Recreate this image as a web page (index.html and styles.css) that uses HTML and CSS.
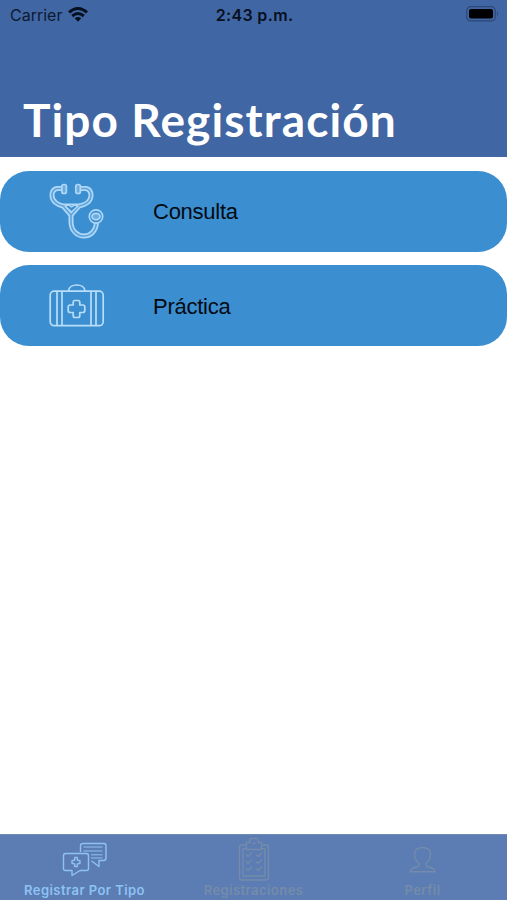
FILE: index.html
```html
<!DOCTYPE html>
<html lang="es">
<head>
<meta charset="utf-8">
<title>Tipo Registración</title>
<link rel="stylesheet" href="styles.css">
</head>
<body>
<div class="app">
  <header class="header">
    <div class="status">
      <div class="carrier"><span>Carrier</span>
        <svg class="wifi" width="20" height="15" viewBox="0 0 20 15" fill="none" stroke="#07101f" stroke-width="3"><path d="M1 5.400Q10-2.300 19 5.400M4.200 9Q10 4.100 15.800 9"/><path d="M6.700 11.300Q10 8.600 13.300 11.300L10 14.700Z" fill="#07101f" stroke="none"/></svg>
      </div>
      <div class="time">2:43 p.m.</div>
      <svg class="battery" width="34" height="16" viewBox="0 0 34 16"><rect x=".8" y=".7" width="28.400" height="14.200" rx="4" fill="none" stroke="#2c4778" stroke-width="1.200"/><rect x="3" y="3" width="24" height="9.600" rx="2" fill="#000"/><path d="M31 5.500q2 2 0 4.500z" fill="#2c4778"/></svg>
    </div>
    <h1 class="title">Tipo Registración</h1>
  </header>
  <main class="list">
    <div class="card">
      <svg class="icon" width="56" height="56" viewBox="0 0 56 56" fill="none" stroke-linecap="round" stroke-linejoin="round">
        <g stroke="#b0d7f5" stroke-width="5"><path d="M13 5.500H8Q3 6.500 3 12.500C3 18.500 9 22 14 23H30C36 22 42 18.500 42 12.500Q42 6.500 37 5.500H32M15 24L22 32L29 24M22 32V38.500C22 57.500 48 58.500 47.500 37.500"/></g>
        <g stroke="#5ba4dd" stroke-width="1.600"><path d="M13 5.500H8Q3 6.500 3 12.500C3 18.500 9 22 14 23H30C36 22 42 18.500 42 12.500Q42 6.500 37 5.500H32M15 24L22 32L29 24M22 32V38.500C22 57.500 48 58.500 47.500 37.500"/></g>
        <path d="M16 23L19.500 22L22.500 24L25.500 22L29 23L22.500 29Z" fill="#3b8ed0" stroke="#b0d7f5" stroke-width="1.500"/>
        <g fill="#6bade1" stroke="#b0d7f5" stroke-width="1.700"><rect x="12.800" y="1.500" width="4.600" height="9" rx="2"/><rect x="26.800" y="1.500" width="4.600" height="9" rx="2"/><circle cx="47" cy="33.500" r="6.700" fill="#3b8ed0"/><ellipse cx="47" cy="33.500" rx="4" ry="3.200"/></g>
      </svg>
      <span class="label">Consulta</span>
    </div>
    <div class="card">
      <svg class="icon" width="56" height="56" viewBox="0 0 56 56" fill="none" stroke="#b9ddf8" stroke-width="1.700" stroke-linejoin="round"><rect x="1.200" y="13.200" width="53" height="34.500" rx="4"/><path d="M8 13.500V47.500M13 13.500V47.500M42 13.500V47.500M47 13.500V47.500M19.500 13C20 5 35.500 5 36 13"/><path d="M25.800 22.500H29.200Q30.800 22.500 30.800 24V27H33.800Q35.800 27 35.800 29V32.500Q35.800 34.500 33.800 34.500H30.800V37.500Q30.800 39.500 29 39.500H26Q24.200 39.500 24.200 37.500V34.500H21.200Q19.200 34.500 19.200 32.500V29Q19.200 27 21.200 27H24.200V24Q24.200 22.500 25.800 22.500Z"/></svg>
      <span class="label">Práctica</span>
    </div>
  </main>
  <nav class="tabs">
    <div class="tab active">
      <svg class="glyph" width="46" height="44" viewBox="0 0 46 44" fill="none" stroke="currentColor" stroke-width="1.400" stroke-linejoin="round"><path d="M18.500 15V9Q18.500 6.500 21 6.500H42Q44 6.500 44 9V21Q44 23.500 41.500 23.500H37V29.500L29.500 24"/><path d="M21.500 10H40.500M21.500 14H40.500M29 17.800H40.500M29 21H40.500" stroke-width="1"/><path d="M3.500 16.500H24.500Q26.500 16.500 26.500 19V31.500Q26.500 33.500 24.500 33.500H18L10 38.500V33.500H3.500Q1.500 33.500 1.500 31.500V19Q1.500 16.500 3.500 16.500Z"/><path d="M12.700 20.500h2.600v2.500L18 23.700v2.600l-2.700.7v2.500h-2.600V27L10 26.300v-2.600l2.700-.7z"/></svg>
      <span>Registrar Por Tipo</span>
    </div>
    <div class="tab">
      <svg class="glyph" width="46" height="44" viewBox="0 0 46 44" fill="none" stroke="currentColor" stroke-width="1.300" stroke-linejoin="round"><path d="M15 8H11Q8.500 8 8.500 10.500V40.500Q8.500 43 11 43H35Q37.500 43 37.500 40.500V10.500Q37.500 8 35 8H31"/><path d="M15 11.500H12V39H34V11.500H31M15.500 5.500H19V1.500H27V5.500H30.500V12.500H15.500ZM21.500 6.500H24.500"/><path d="M15 17.500l2 2 4-4M25 17.500l2 2 4-4M15 24.500l2 2 4-4M25 24.500l2 2 4-4M15 31.500l2 2 4-4M25 31.500l2 2 4-4" stroke-width="1.200"/></svg>
      <span>Registraciones</span>
    </div>
    <div class="tab">
      <svg class="glyph" width="46" height="44" viewBox="0 0 46 44" fill="none" stroke="currentColor" stroke-width="1.400" stroke-linejoin="round"><path d="M19 26.500C16 24 14.500 20.500 14.500 17.500C14.500 13 17.500 10.500 22.500 10.500S30.500 13 30.500 17.500C30.500 20.500 29 24 26 26.500V28.500C27 31 34.500 29.500 35 34.700H10C10.500 29.500 18 31 19 28.500Z"/></svg>
      <span>Perfil</span>
    </div>
  </nav>
</div>
</body>
</html>
```
FILE: styles.css
```css
* { box-sizing: border-box; }
body { margin: 0; background: #fff; }
.app { width: 507px; height: 900px; display: flex; flex-direction: column; overflow: hidden; }
.header { height: 157px; background: #4166a4; flex: none; }
.status { height: 30px; padding: 0 8px 0 10px; display: grid; grid-template-columns: 1fr auto 1fr; align-items: center; font: 16px/30px Inter, sans-serif; color: #0d1a31; }
.carrier { display: flex; align-items: center; gap: 6px; letter-spacing: 0; }
.wifi { display: block; margin-top: -2px; }
.time { font-weight: 600; letter-spacing: .35px; color: #07101f; }
.battery { justify-self: end; margin-right: -1px; margin-top: -2px; }
.title { margin: 62px 0 0 23px; font: 700 46px/56px Lato, sans-serif; letter-spacing: 1.1px; color: #fff; white-space: nowrap; }
.list { flex: 1; padding-top: 13.500px; display: flex; flex-direction: column; gap: 13.500px; }
.card { height: 81px; border-radius: 29px; background: #3b8ed0; display: flex; align-items: center; padding-left: 49px; gap: 48px; }
.icon { flex: none; }
.label { font: 22px/26px "Liberation Sans", sans-serif; letter-spacing: -.25px; padding-top: 2px; color: #030a10; }
.tabs { height: 66px; flex: none; display: grid; grid-template-columns: repeat(3, 1fr); background: #5b7db4; border-top: 1px solid #7089b3; }
.tab { display: flex; flex-direction: column; align-items: center; padding-top: 2px; color: #758ba9; font: 600 13px/18px Inter, sans-serif; letter-spacing: .45px; }
.active { color: #8fc2f3; }
.glyph { display: block; flex: none; }
```
